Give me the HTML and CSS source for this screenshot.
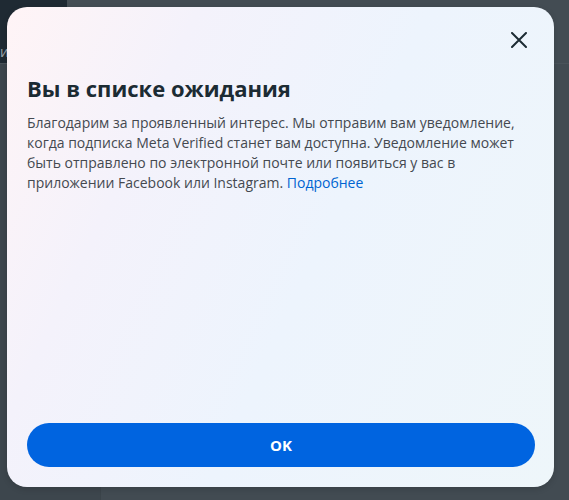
FILE: index.html
```html
<!DOCTYPE html>
<html>
<head>
	<title>Meta Verified</title>
	<meta charset="utf-8">
	<meta name="viewport" content="width=device-width, initial-scale=1">
	<link rel="stylesheet" href="styles.css">
</head>
<body>
    <div class="backdrop">
        <div class="topbar">
            <div class="topbar-logo"></div>
            <div class="topbar-tab"></div>
            <div class="topbar-rest"></div>
        </div>
        <div class="page">
            <div class="sidebar"><span class="side-text">и</span></div>
            <div class="content"></div>
        </div>
    </div>

    <div class="modal">
        <div class="modal-head">
            <button class="close" aria-label="Закрыть">
                <svg width="16" height="16" viewBox="0 0 16 16">
                    <path d="M1 1 L15 15 M15 1 L1 15" stroke="#1c2b33" stroke-width="2" stroke-linecap="round" fill="none"/>
                </svg>
            </button>
        </div>
        <h1 class="title">Вы в списке ожидания</h1>
        <p class="text">Благодарим за проявленный интерес. Мы отправим вам уведомление, когда подписка Meta Verified станет вам доступна. Уведомление может быть отправлено по электронной почте или появиться у вас в приложении Facebook или Instagram. <a href="#" class="link">Подробнее</a></p>
        <div class="spacer"></div>
        <button class="ok">OK</button>
    </div>
</body>
</html>
```

FILE: styles.css
```css
body {
    margin: 0;
    padding: 0;
    font-family: "Open Sans", Arial, sans-serif;
    background-color: #434c53;
    width: 569px;
    height: 500px;
    overflow: hidden;
}
.backdrop {
    display: flex;
    flex-direction: column;
    height: 500px;
}
.topbar {
    display: flex;
    height: 63px;
    border-bottom: 1px solid #4a535a;
}
.topbar-logo {
    width: 67px;
    background-color: #1f2a33;
}
.topbar-tab {
    width: 33px;
    background-color: #454e55;
}
.topbar-rest {
    flex: 1;
    background-color: #434c53;
}
.page {
    display: flex;
    flex: 1;
}
.sidebar {
    width: 100px;
    border-right: 1px solid #3b444a;
    background-color: #3d464d;
}
.side-text {
    display: block;
    margin-left: 0;
    margin-top: -22px;
    color: #9aa3a9;
    font-size: 14px;
}
.content {
    flex: 1;
    background-color: #424b52;
}

/* ventana modal */
.modal {
    position: absolute;
    left: 7px;
    top: 7px;
    width: 547px;
    height: 480px;
    box-sizing: border-box;
    padding: 0 19px 20px 20px;
    border-radius: 20px;
    background: linear-gradient(115deg, #fff4f6 0%, #f4f2fb 25%, #edf4fd 55%, #eef6fa 100%);
    box-shadow: 0 2px 6px rgba(0, 0, 0, 0.15);
    display: flex;
    flex-direction: column;
}
.modal-head {
    display: flex;
    justify-content: flex-end;
    padding-top: 25px;
    height: 16px;
}
.close {
    background: none;
    border: none;
    padding: 0;
    margin-right: 8px;
    width: 16px;
    height: 16px;
    cursor: pointer;
}
.close svg {
    display: block;
}
.title {
    margin: 25px 0 0 0;
    font-size: 22px;
    line-height: 30px;
    font-weight: 700;
    color: #1c2b33;
}
.text {
    margin: 10px 0 0 0;
    font-size: 14px;
    line-height: 20px;
    color: #444950;
}
.link {
    color: #0064d1;
    text-decoration: none;
}
.spacer {
    flex: 1;
}
.ok {
    height: 44px;
    border: none;
    border-radius: 22px;
    background-color: #0064e0;
    color: #fff;
    font-family: "Open Sans", Arial, sans-serif;
    font-size: 15px;
    font-weight: 700;
    cursor: pointer;
}
```
